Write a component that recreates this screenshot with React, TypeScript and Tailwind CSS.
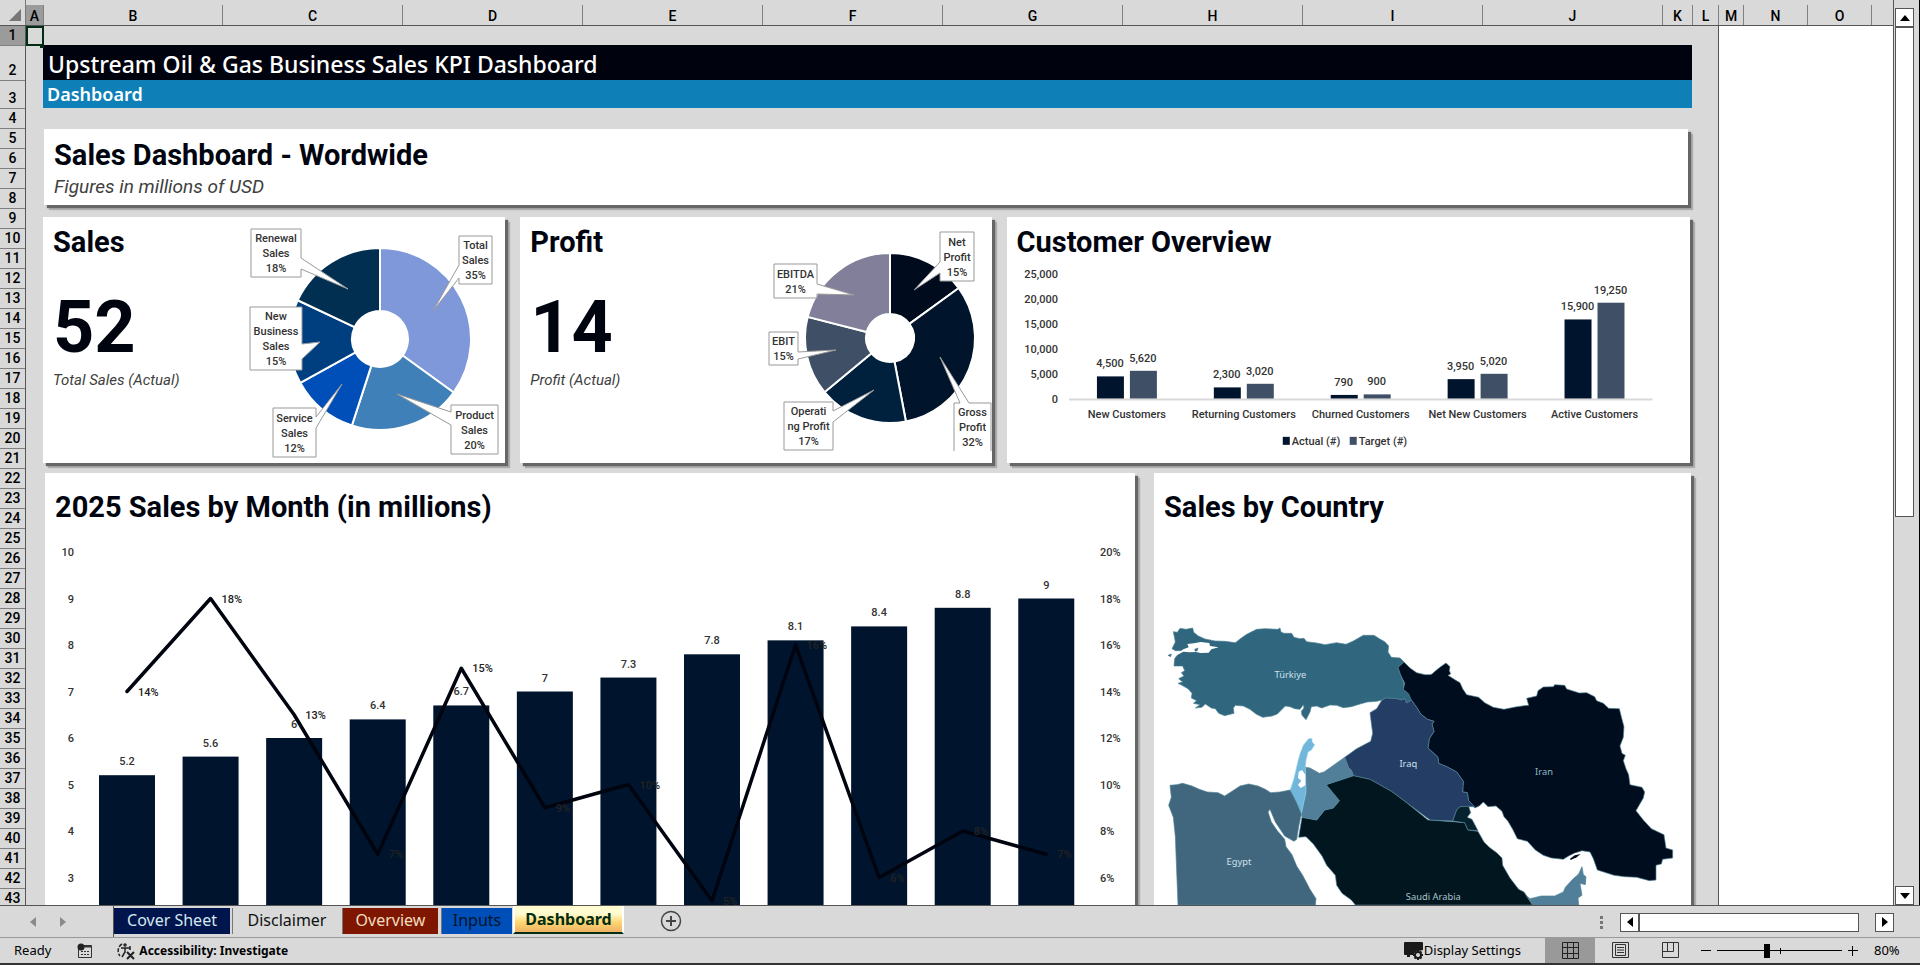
import { ReactNode } from "react";

type Column = { label: string; size: number; selected?: boolean };

// Column sizes are relative, the sheet fills whatever room the window gives
const columns: Column[] = [
  { label: "A", size: 18, selected: true },
  { label: "B", size: 179 },
  { label: "C", size: 180 },
  { label: "D", size: 180 },
  { label: "E", size: 180 },
  { label: "F", size: 180 },
  { label: "G", size: 180 },
  { label: "H", size: 180 },
  { label: "I", size: 180 },
  { label: "J", size: 180 },
  { label: "K", size: 30 },
  { label: "L", size: 26 },
  { label: "M", size: 25 },
  { label: "N", size: 64 },
  { label: "O", size: 64 },
  { label: "", size: 21 },
];

const rowNumbers = Array.from({ length: 43 }, (_, i) => i + 1);

const rowHeight = (row: number) => {
  if (row === 2) return "h-[35px]";
  if (row === 3) return "h-7";
  return "h-5";
};

const share = (size: number) => ({ flex: `${size} ${size} ${size}px` });

const customers = [
  { name: "New Customers", actual: 4500, target: 5620 },
  { name: "Returning Customers", actual: 2300, target: 3020 },
  { name: "Churned Customers", actual: 790, target: 900 },
  { name: "Net New Customers", actual: 3950, target: 5020 },
  { name: "Active Customers", actual: 15900, target: 19250 },
];

const monthlySales = [5.2, 5.6, 6, 6.4, 6.7, 7, 7.3, 7.8, 8.1, 8.4, 8.8, 9];
const monthlyGrowth = [14, 18, 13, 7, 15, 9, 10, 5, 16, 6, 8, 7];

type CalloutData = { x: number; y: number; w: number; h: number; lines: string[]; path: string };

const salesSlices = [
  { share: 35, color: "#7f98da" },
  { share: 20, color: "#3f80b8" },
  { share: 12, color: "#004fb9" },
  { share: 15, color: "#003f7f" },
  { share: 18, color: "#002f52" },
];

const salesCallouts: CalloutData[] = [
  { x: 8, y: 7, w: 50, h: 48, lines: ["Renewal", "Sales", "18%"], path: "M8 7H58V36L105 67L58 47V55H8Z" },
  { x: 216, y: 14, w: 33, h: 48, lines: ["Total", "Sales", "35%"], path: "M216 14H249V62H216V56L190 89L216 43Z" },
  { x: 7, y: 85, w: 52, h: 63, lines: ["New", "Business", "Sales", "15%"], path: "M7 85H59V122L77 120L59 137V148H7Z" },
  { x: 30, y: 186, w: 43, h: 49, lines: ["Service", "Sales", "12%"], path: "M30 186H73V195L99 162L73 206V235H30Z" },
  { x: 208, y: 183, w: 47, h: 49, lines: ["Product", "Sales", "20%"], path: "M208 183H255V232H208V203L154 172L208 190Z" },
];

const profitSlices = [
  { share: 15, color: "#000c1d" },
  { share: 32, color: "#00142b" },
  { share: 17, color: "#00213d" },
  { share: 15, color: "#3f5066" },
  { share: 21, color: "#817f99" },
];

const profitCallouts: CalloutData[] = [
  { x: 178, y: 10, w: 34, h: 49, lines: ["Net", "Profit", "15%"], path: "M178 10H212V59H178V51L152 68L178 40Z" },
  { x: 12, y: 42, w: 43, h: 34, lines: ["EBITDA", "21%"], path: "M12 42H55V62L92 73L55 72V76H12Z" },
  { x: 7, y: 110, w: 29, h: 33, lines: ["EBIT", "15%"], path: "M7 110H36V130L74 128L36 137V143H7Z" },
  { x: 22, y: 180, w: 49, h: 48, lines: ["Operati", "ng Profit", "17%"], path: "M22 180H71V189L112 168L71 200V228H22Z" },
  { x: 192, y: 181, w: 37, h: 48, lines: ["Gross", "Profit", "32%"], path: "M192 229V181H198L178 135L207 181H229V229" },
];

const cardShadow = "shadow-[3px_3px_1px_#666666,5px_5px_1px_#adadad]";

const Callout = ({ data }: { data: CalloutData }) => {
  const top = data.y + (data.h - (data.lines.length - 1) * 15) / 2;
  return (
    <g>
      <path d={data.path} fill="#fff" stroke="#999" strokeWidth="1" />
      {data.lines.map((line, i) => (
        <text key={line} x={data.x + data.w / 2} y={top + i * 15 + 4} textAnchor="middle" fontSize="11" fontWeight="500" fill="#333">
          {line}
        </text>
      ))}
    </g>
  );
};

type DonutProps = {
  cx: number;
  cy: number;
  outer: number;
  inner: number;
  slices: { share: number; color: string }[];
  callouts: CalloutData[];
};

const Donut = ({ cx, cy, outer, inner, slices, callouts }: DonutProps) => {
  let start = 0;
  const point = (percent: number, r: number) => {
    const a = (percent / 100) * Math.PI * 2;
    return `${cx + r * Math.sin(a)} ${cy - r * Math.cos(a)}`;
  };
  return (
    <>
      {slices.map((slice) => {
        const from = start;
        start += slice.share;
        return (
          <path
            key={slice.color}
            d={`M${point(from, inner)}L${point(from, outer)}A${outer} ${outer} 0 0 1 ${point(start, outer)}L${point(start, inner)}A${inner} ${inner} 0 0 0 ${point(from, inner)}Z`}
            fill={slice.color}
            stroke="#fff"
            strokeWidth="2"
          />
        );
      })}
      {callouts.map((c) => (
        <Callout key={c.lines.join()} data={c} />
      ))}
    </>
  );
};

const CustomerChart = () => (
  <svg viewBox="0 0 680 200" className="w-full" role="img" aria-label="Customer overview chart">
    {[25000, 20000, 15000, 10000, 5000, 0].map((v) => (
      <text key={v} x="49" y={143 - v / 200} textAnchor="end" fontSize="11" fontWeight="500" fill="#333">
        {v.toLocaleString("en-US")}
      </text>
    ))}
    {customers.map((c, i) => {
      const x = 88 + 117 * i;
      return (
        <g key={c.name} fontSize="11" fontWeight="500" textAnchor="middle" fill="#333">
          <rect x={x} y={139 - c.actual / 200} width="27" height={c.actual / 200} fill="#00152d" />
          <rect x={x + 33} y={139 - c.target / 200} width="27" height={c.target / 200} fill="#3f5066" />
          <text x={x + 13} y={130 - c.actual / 200}>{c.actual.toLocaleString("en-US")}</text>
          <text x={x + 46} y={130 - c.target / 200}>{c.target.toLocaleString("en-US")}</text>
          <text x={x + 30} y="158">{c.name}</text>
        </g>
      );
    })}
    <path d="M60 139.500H644" stroke="#d9d9d9" strokeWidth="2" />
    <rect x="274" y="177" width="7" height="8" fill="#00152d" />
    <text x="283" y="185" fontSize="11" fontWeight="500" fill="#333">Actual (#)</text>
    <rect x="341" y="177" width="7" height="8" fill="#3f5066" />
    <text x="350" y="185" fontSize="11" fontWeight="500" fill="#333">Target (#)</text>
  </svg>
);

const MonthlyChart = () => {
  const barX = (i: number) => 54 + i * 83.57;
  const salesY = (v: number) => 12 + (10 - v) * 46.5;
  const growthY = (v: number) => salesY(v / 2);
  const points = monthlyGrowth.map((g, i) => `${barX(i) + 28},${growthY(g)}`).join(" ");
  return (
    <svg viewBox="0 0 1090 480" className="w-full" role="img" aria-label="Sales by month chart">
      <g fontSize="11" fontWeight="500" fill="#333">
        {[10, 9, 8, 7, 6, 5, 4, 3].map((v) => (
          <g key={v}>
            <text x="29" y={salesY(v) + 4} textAnchor="end">{v}</text>
            <text x="1055" y={salesY(v) + 4}>{v * 2}%</text>
          </g>
        ))}
        {monthlySales.map((v, i) => (
          <g key={v}>
            <rect x={barX(i)} y={salesY(v)} width="56" height={480 - salesY(v)} fill="#00152d" />
            <text x={barX(i) + 28} y={salesY(v) - 10} textAnchor="middle">{v}</text>
          </g>
        ))}
        <polyline points={points} fill="none" stroke="#00040f" strokeWidth="3.500" strokeLinejoin="round" strokeLinecap="round" />
        {monthlyGrowth.map((g, i) => (
          <text key={i} x={barX(i) + 39} y={growthY(g) + 4} fill="#222">{g}%</text>
        ))}
      </g>
    </svg>
  );
};

const CountryMap = () => (
  <svg viewBox="12 0 1611 1000" className="w-full" role="img" aria-label="Sales by country map">
    <g stroke="#4f8494" strokeWidth="2" strokeLinejoin="round">
      <path
        fill="#30677f"
        d="M70 35L82 37L90 25L108 28L128 24L131 37L145 48L165 57L195 63L225 64L256 68L270 57L290 43L320 28L345 26L384 28L390 24L393 36L402 40L425 40L432 52L450 56L462 55L470 65L500 69L525 74L560 68L588 73L610 63L640 46L672 46L688 56L704 65L716 78L714 96L724 112L750 114L762 126L744 142L752 165L762 190L760 208L776 222L786 240L770 249L764 236L754 240L740 236L708 234L696 240L680 244L652 246L630 252L604 260L580 263L560 256L540 255L515 264L500 258L484 260L480 276L468 299L456 286L454 274L462 264L460 254L450 268L434 266L420 260L406 258L394 270L382 282L366 288L338 292L318 282L300 268L280 258L256 256L250 264L252 280L224 287L206 280L196 266L184 264L166 252L156 262L136 264L150 254L130 250L140 242L124 234L126 220L114 206L96 196L84 190L98 186L86 176L102 168L94 158L104 152L98 138L72 138L74 116L84 102L100 92L76 92L66 86L76 66Z"
      />
      <path fill="#fff" stroke="none" d="M78 104L100 88L116 82L112 72L132 70L152 66L178 69L180 78L206 82L184 88L176 98L152 99L138 96L118 97L100 95L76 108Z" />
      <path fill="#30677f" d="M54 106L64 102L62 110ZM134 88L144 84L142 92L136 94Z" />
      <path
        fill="#000d1f"
        d="M762 126L780 144L800 158L825 164L840 164L846 162L856 153L872 140L888 129L900 140L898 152L902 162L894 166L916 180L930 188L938 206L950 224L986 232L1004 248L1030 262L1062 268L1096 261L1122 257L1136 256L1130 235L1160 228L1164 212L1180 201L1210 200L1214 194L1244 196L1250 207L1288 219L1310 218L1334 230L1340 242L1360 250L1376 265L1408 266L1414 290L1422 320L1420 352L1410 378L1416 400L1426 406L1420 422L1428 446L1436 464L1440 494L1476 502L1484 516L1480 534L1458 572L1480 600L1504 626L1542 644L1548 684L1568 690L1568 714L1538 718L1534 732L1518 736L1518 780L1498 782L1460 772L1424 770L1392 766L1342 750L1330 716L1320 696L1296 692L1278 698L1256 708L1240 718L1204 714L1180 706L1156 690L1132 664L1102 656L1088 628L1074 604L1062 590L1056 574L1038 558L1014 560L1000 546L988 558L974 564L956 542L952 518L938 516L940 484L920 456L894 442L866 430L864 412L834 384L838 356L852 334L846 312L852 304L832 298L812 282L800 262L784 240L776 222L760 208L764 190L752 165L744 142Z"
      />
      <path
        fill="#233d65"
        d="M696 240L708 234L740 236L754 240L764 236L770 249L784 240L800 262L812 282L832 298L852 304L846 312L852 334L838 356L834 384L864 412L866 430L894 442L920 456L940 484L938 516L952 518L956 542L974 560L930 560L920 570L908 603L840 600L770 548L724 514L660 478L610 467L604 450L596 444L584 412L620 386L662 364L668 340L664 310L660 278L680 266Z"
      />
      <path
        fill="#02161f"
        d="M610 467L660 478L724 514L770 548L834 600L908 605L944 608L954 630L984 634L1002 666L1018 682L1040 698L1056 714L1058 736L1080 774L1106 808L1122 816L1148 855L616 855L604 840L576 820L560 796L556 766L530 736L516 708L490 672L468 650L446 652L456 592L500 600L524 570L550 564L568 542L528 494Z"
      />
      <path fill="#07222f" d="M908 603L920 570L930 560L956 559L962 578L952 592L966 598L984 632L954 630L944 608Z" />
      <path
        fill="#517f9a"
        d="M466 442L480 444L508 460L522 456L584 412L596 444L604 450L610 467L528 494L568 542L550 564L524 570L500 600L456 592L454 580L468 516Z"
      />
      <path fill="#72b6db" stroke="#8bd5e9" d="M476 356L486 356L486 366L494 374L484 390L474 396L468 420L466 442L468 516L454 582L440 548L420 512L432 476L444 424L450 402L460 376Z" />
      <path fill="#fff" stroke="none" d="M446 455L456 450L466 464L466 496L452 504L444 494L454 482L444 474Z" />
      <path
        fill="#41677f"
        d="M60 496L80 494L98 490L126 498L148 508L172 516L204 518L224 528L246 514L270 498L296 492L324 498L346 508L362 518L390 516L420 510L440 548L454 582L446 620L440 658L432 664L404 648L376 606L360 568L354 576L364 606L382 632L404 658L408 680L426 704L440 738L458 766L480 808L498 836L496 855L84 855L76 650L70 592L56 556L64 532Z"
      />
      <path fill="#517f9a" d="M1128 826L1140 836L1174 828L1214 828L1240 816L1246 802L1268 778L1286 762L1296 740L1300 764L1308 770L1306 794L1290 790L1296 826L1284 834L1286 855L1148 855Z" />
      <path fill="#fff" stroke="none" d="M1256 710L1274 700L1296 697L1284 706L1262 717Z" />
      <path fill="#000d1f" stroke="none" d="M1260 716L1274 706L1292 702L1280 712L1262 720Z" />
    </g>
    <g fill="#cfe0ea" fontSize="28" textAnchor="middle" className="font-['Noto_Sans']">
      <text x="421" y="175">Türkiye</text>
      <text x="775" y="442">Iraq</text>
      <text x="1182" y="466" fill="#8fb9c4">Iran</text>
      <text x="267" y="735">Egypt</text>
      <text x="850" y="840" fill="#a9c4cb">Saudi Arabia</text>
    </g>
  </svg>
);

const Card = ({ title, tall, children }: { title: string; tall?: boolean; children: ReactNode }) => (
  <section className={`relative min-w-0 bg-white px-2.5 ${tall ? "pt-4" : "pt-[7px]"} ${cardShadow}`}>
    <h2 className="text-[29px] font-bold leading-9 text-[#00040f]">{title}</h2>
    {children}
  </section>
);

const Kpi = ({ value, caption }: { value: string; caption: string }) => (
  <div className="pt-7">
    <p className="text-[72px] font-bold leading-20 text-[#00040f]">{value}</p>
    <p className="text-[15px] italic leading-6 text-[#404040]">{caption}</p>
  </div>
);

const ColumnHeaders = () => (
  <div className="flex h-[26px] shrink-0 border-b border-[#555] text-sm font-medium">
    <div className="flex w-[26px] shrink-0 items-end justify-end border-r border-[#777] p-1">
      <svg viewBox="0 0 12 12" className="size-3"><path d="M12 0V12H0Z" fill="#777" /></svg>
    </div>
    <div className="flex flex-1 items-end">
      {columns.map((c, i) => (
        <div
          key={i}
          className={`flex h-5 min-w-0 items-center justify-center pt-0.5 ${c.label ? "border-r border-[#808080]" : ""} ${c.selected ? "bg-[#9b9b9b]" : ""}`}
          style={share(c.size)}
        >
          {c.label}
        </div>
      ))}
    </div>
  </div>
);

const RowHeaders = () => (
  <div className="w-[26px] shrink-0 border-r border-[#555] text-sm font-medium">
    {rowNumbers.map((row) => (
      <div
        key={row}
        className={`flex items-end justify-center border-b border-[#808080] pb-0.5 leading-4 ${rowHeight(row)} ${row === 1 ? "bg-[#9b9b9b]" : ""}`}
      >
        {row}
      </div>
    ))}
  </div>
);

const arrowButton = "flex size-[19px] shrink-0 items-center justify-center border border-[#555] bg-white";

const Arrow = ({ d, color = "#000" }: { d: string; color?: string }) => (
  <svg viewBox="0 0 10 10" className="size-2.5"><path d={d} fill={color} /></svg>
);

const VerticalScrollbar = () => (
  <div className="flex w-[26px] shrink-0 flex-col items-center border-r border-black pr-1 pt-2">
    <button aria-label="Scroll up" className={arrowButton}><Arrow d="M0 8L5 2L10 8Z" /></button>
    <div className="flex w-[19px] flex-1 flex-col">
      <div className="h-[57%] border border-[#555] bg-white" />
    </div>
    <button aria-label="Scroll down" className={arrowButton}><Arrow d="M0 2L5 8L10 2Z" /></button>
  </div>
);

const SheetTabs = () => (
  <div className="flex h-8 shrink-0 items-start border-t border-[#555] font-['Noto_Sans'] text-base leading-6">
    <div className="flex h-8 w-[114px] items-center gap-5 border-r border-[#555] pl-7">
      <button aria-label="Previous sheet"><Arrow d="M8 0V10L2 5Z" color="#8a8a8a" /></button>
      <button aria-label="Next sheet"><Arrow d="M2 0V10L8 5Z" color="#8a8a8a" /></button>
    </div>
    <button className="mt-0.5 h-[26px] w-[116px] bg-[#00144d] pb-1 text-[#d5e8ee]">Cover Sheet</button>
    <button className="ml-0.5 mt-0.5 h-[26px] w-[109px] border-l border-[#777] pb-1 text-[#111]">Disclaimer</button>
    <button className="ml-px mt-0.5 h-[26px] w-[96px] border-l border-[#777] bg-[#7f1700] pb-1 text-[#f2dcc0]">Overview</button>
    <button className="ml-[3px] mt-0.5 h-[26px] w-[71px] border-l border-[#777] bg-[#004fb9] pb-1 text-[#00142b]">Inputs</button>
    <button className="ml-px h-7 w-[111px] border-2 border-t-0 border-white border-b-[#002d14] bg-linear-to-b from-[#fffbd0] from-30% via-[#ffd873] via-60% to-[#efb163] bg-clip-padding font-bold text-[#002d14]">
      Dashboard
    </button>
    <button aria-label="New sheet" className="ml-9 mt-1">
      <svg viewBox="0 0 22 22" className="size-[22px]" fill="none" stroke="#444">
        <circle cx="11" cy="11" r="9.500" strokeWidth="1.500" />
        <path d="M11 6V16M6 11H16" strokeWidth="2" />
      </svg>
    </button>
    <div className="ml-auto flex h-8 items-center pr-[26px]">
      <div className="mr-[17px] flex flex-col gap-0.5">
        <span className="size-[3px] bg-[#777]" />
        <span className="size-[3px] bg-[#777]" />
        <span className="size-[3px] bg-[#777]" />
      </div>
      <button aria-label="Scroll left" className={arrowButton}><Arrow d="M8 0V10L2 5Z" /></button>
      <div className="mr-4 h-[19px] w-[220px] border border-[#555] bg-white" />
      <button aria-label="Scroll right" className={arrowButton}><Arrow d="M2 0V10L8 5Z" /></button>
    </div>
  </div>
);

const StatusBar = () => (
  <footer className="flex h-7 shrink-0 items-stretch border-b-2 border-t border-b-[#333] border-t-[#999] font-['Noto_Sans'] text-[13px] text-black">
    <span className="flex items-center pl-3.5">Ready</span>
    <svg viewBox="0 0 16 16" className="ml-[26px] size-4 self-center" fill="none" stroke="#333">
      <path d="M1.500 5V14.500H14.500V2.500H6" />
      <path d="M6 3.500H14.500" strokeWidth="2" />
      <path d="M4 8.500H6M7 8.500H9M10 8.500H12M4 11.500H6M7 11.500H9M10 11.500H12" />
      <circle cx="4" cy="4" r="3.500" fill="#222" stroke="none" />
    </svg>
    <button className="ml-6 flex items-center gap-1 text-xs font-bold">
      <svg viewBox="0 0 18 18" className="size-[18px]" fill="none" stroke="#222" strokeWidth="1.500">
        <path d="M5 2A8 8 0 0 0 3 14" strokeDasharray="4 1.500" />
        <circle cx="8" cy="3" r="1" />
        <path d="M4 6H13M8 6V10L5 15M13 4V8" />
        <path d="M10 10L17 17M17 10L10 17" strokeWidth="2" />
      </svg>
      Accessibility: Investigate
    </button>
    <button className="ml-auto flex items-center">
      <svg viewBox="0 0 20 18" className="h-[18px] w-5">
        <path d="M1 0H18Q19 0 19 1V8L10 10V13H6V15H3V13H1Q0 13 0 12V1Q0 0 1 0Z" fill="#1a1a1a" />
        <circle cx="14" cy="13" r="3" fill="none" stroke="#1a1a1a" strokeWidth="2" />
        <path d="M14 8V10M14 16V18M9 13H11M17 13H19M10.500 9.500L12 11M16 15L17.500 16.500M17.500 9.500L16 11M12 15L10.500 16.500" stroke="#1a1a1a" strokeWidth="2" />
      </svg>
      Display Settings
    </button>
    <div className="ml-6 flex">
      <button aria-label="Normal view" className="flex w-[50px] items-center justify-center bg-[#999]">
        <svg viewBox="0 0 17 17" className="size-[17px]" fill="none" stroke="#222"><path d="M.5 .5H16.500V16.500H.5ZM.5 5.500H16.500M.5 11.500H16.500M5.500 .5V16.500M11.500 .5V16.500" /></svg>
      </button>
      <button aria-label="Page layout view" className="flex w-[50px] items-center justify-center">
        <svg viewBox="0 0 17 17" className="size-[17px]" fill="none" stroke="#333"><path d="M.5 .5H16.500V15.500H.5ZM3.500 2.500H13.500V13.500H3.500ZM5 5.500H12M5 8H12M5 10.500H12" /></svg>
      </button>
      <button aria-label="Page break preview" className="flex w-[50px] items-center justify-center">
        <svg viewBox="0 0 17 17" className="size-[17px]" fill="none" stroke="#333"><path d="M.5 .5H16.500V15.500H.5ZM.5 9.500H11.500V.5M5.500 .5V9.500" /></svg>
      </button>
    </div>
    <div className="ml-1.5 flex items-center gap-1.5">
      <button aria-label="Zoom out"><svg viewBox="0 0 10 10" className="size-2.5"><path d="M0 4.500H10" stroke="#000" /></svg></button>
      <div className="relative flex w-[125px] items-center">
        <input
          type="range"
          aria-label="Zoom"
          min={10}
          max={190}
          defaultValue={81}
          className="h-4 w-full appearance-none bg-[linear-gradient(#000,#000)] bg-[length:100%_1px] bg-center bg-no-repeat [&::-webkit-slider-thumb]:h-3.5 [&::-webkit-slider-thumb]:w-1.5 [&::-webkit-slider-thumb]:appearance-none [&::-webkit-slider-thumb]:bg-black"
        />
        <span className="absolute left-1/2 h-1.5 w-px bg-black" />
      </div>
      <button aria-label="Zoom in"><svg viewBox="0 0 10 10" className="size-2.5"><path d="M0 4.500H10M4.500 0V10" stroke="#000" /></svg></button>
    </div>
    <span className="flex w-[62px] items-center pl-4">80%</span>
  </footer>
);

const App = () => {
  return (
    <div className="flex h-screen flex-col overflow-hidden bg-[#d9d9d9] font-['Roboto',sans-serif]">
      <div className="flex min-h-0 flex-1">
        <div className="flex min-w-0 flex-1 flex-col overflow-hidden border-r border-[#555]">
          <ColumnHeaders />
          <div className="flex min-h-0 flex-1 overflow-hidden">
            <RowHeaders />
            <main className="relative min-w-0 overflow-hidden border-r border-[#555] pl-[17px] pr-[26px] pt-[19px]" style={share(1693)}>
              <div className="absolute left-0 top-0 h-5 w-[18px] border-2 border-[#002d14]">
                <span className="absolute -bottom-1 -right-0.5 size-1 bg-[#002d14]" />
              </div>
              <h1 className="h-[35px] bg-[#00020d] pl-[5px] font-['Noto_Sans'] text-[23px] font-medium leading-[38px] text-white">
                Upstream Oil &amp; Gas Business Sales KPI Dashboard
              </h1>
              <p className="h-7 bg-[#0f7fb8] pl-1 font-['Noto_Sans'] text-lg font-semibold leading-7 text-white">Dashboard</p>
              <section className={`ml-px mr-1 mt-[21px] h-[76px] bg-white px-2.5 pt-2 ${cardShadow}`}>
                <h2 className="text-[29px] font-bold leading-9 text-[#00040f]">Sales Dashboard - Wordwide</h2>
                <p className="text-[19px] italic leading-7 text-[#404040]">Figures in millions of USD</p>
              </section>
              <div className="mr-0.5 mt-3 grid h-[246px] grid-cols-[462fr_471fr_683fr] gap-[15px]">
                <Card title="Sales">
                  <Kpi value="52" caption="Total Sales (Actual)" />
                  <svg viewBox="0 0 260 240" className="absolute right-0.5 top-[5px] h-60 w-[260px]" role="img" aria-label="Sales breakdown">
                    <Donut cx={137} cy={117} outer={91} inner={28} slices={salesSlices} callouts={salesCallouts} />
                  </svg>
                </Card>
                <Card title="Profit">
                  <Kpi value="14" caption="Profit (Actual)" />
                  <svg viewBox="0 0 230 240" className="absolute right-0 top-[5px] h-60 w-[230px]" role="img" aria-label="Profit breakdown">
                    <Donut cx={128} cy={116} outer={85} inner={24} slices={profitSlices} callouts={profitCallouts} />
                  </svg>
                </Card>
                <Card title="Customer Overview">
                  <div className="-mx-2">
                    <CustomerChart />
                  </div>
                </Card>
              </div>
              <div className="ml-0.5 mr-px mt-2.5 grid h-[500px] grid-cols-[1090fr_537fr] gap-[19px]">
                <Card title="2025 Sales by Month (in millions)" tall>
                  <div className="-mx-2.5 pt-[15px]">
                    <MonthlyChart />
                  </div>
                </Card>
                <Card title="Sales by Country" tall>
                  <div className="-mx-2.5 pt-[95px]">
                    <CountryMap />
                  </div>
                </Card>
              </div>
            </main>
            <div className="bg-white" style={share(174)} />
          </div>
        </div>
        <VerticalScrollbar />
      </div>
      <SheetTabs />
      <StatusBar />
    </div>
  );
};

export default App;
